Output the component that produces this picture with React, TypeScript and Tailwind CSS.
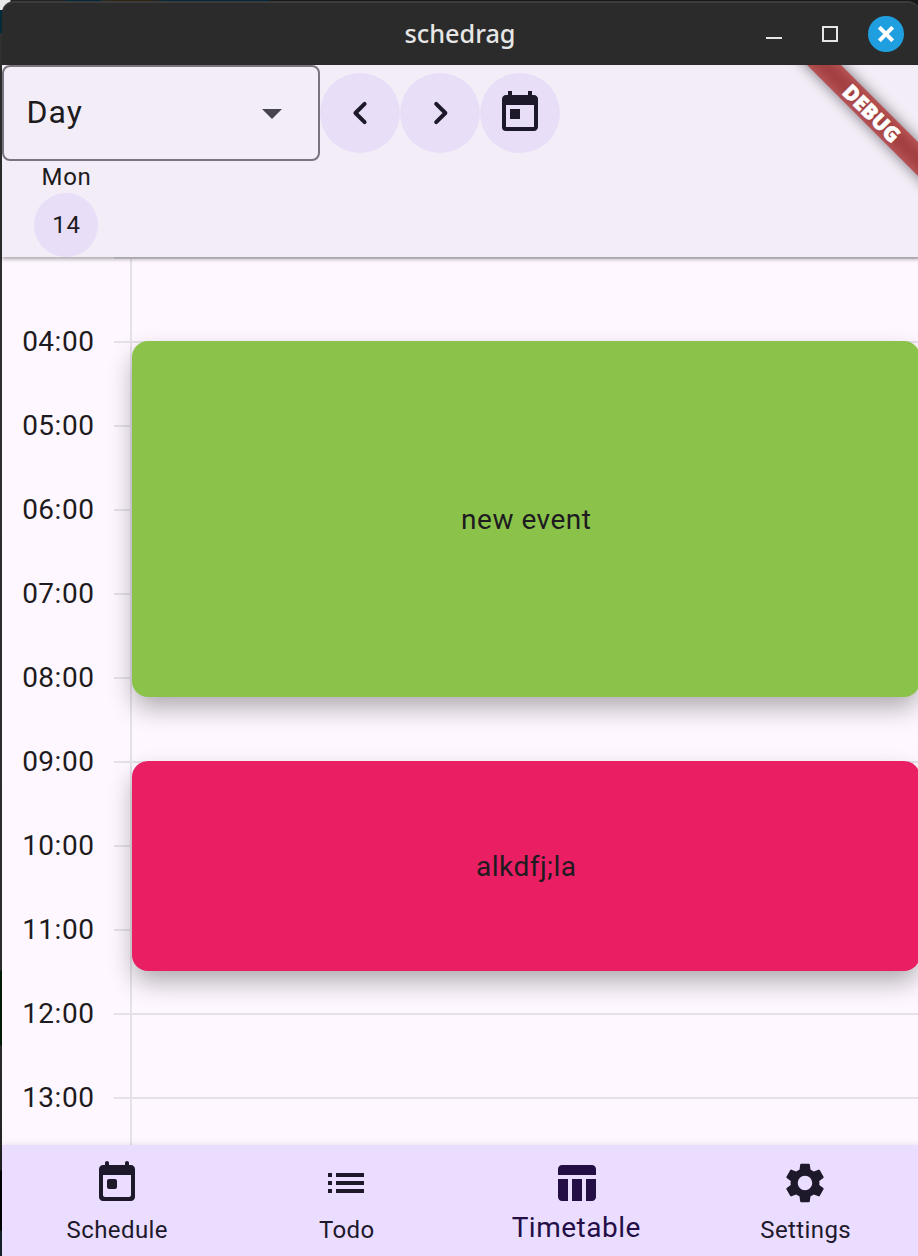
import type { ReactNode } from "react";
import { MdList, MdSettings, MdTableChart, MdToday } from "react-icons/md";

const HOUR = 84;
const FIRST_HOUR = 3;
const hours = Array.from({ length: 11 }, (_, i) => FIRST_HOUR + i);

const events = [
  { title: "new event", start: 4, height: 356, color: "bg-[#8bc34a]" },
  { title: "alkdfj;la", start: 9, height: 210, color: "bg-[#e91e63]" },
];

function Chevron({ d }: { d: string }) {
  return (
    <svg viewBox="0 0 24 24" className="size-12" fill="none" stroke="currentColor" strokeWidth="2" strokeLinecap="round" strokeLinejoin="round">
      <path d={d} />
    </svg>
  );
}

function TodayRounded() {
  return (
    <svg viewBox="0 0 24 24" className="size-12" fill="currentColor">
      <path d="M19 3h-1V2c0-.55-.45-1-1-1s-1 .45-1 1v1H8V2c0-.55-.45-1-1-1s-1 .45-1 1v1H5c-1.11 0-1.99.9-1.99 2L3 19c0 1.1.89 2 2 2h14c1.1 0 2-.9 2-2V5c0-1.1-.9-2-2-2zm-1 16H6c-.55 0-1-.45-1-1V8h14v10c0 .55-.45 1-1 1zM8 10h3c.55 0 1 .45 1 1v3c0 .55-.45 1-1 1H8c-.55 0-1-.45-1-1v-3c0-.55.45-1 1-1z" />
    </svg>
  );
}

function RoundButton({ children }: { children: ReactNode }) {
  return (
    <button className="flex size-20 items-center justify-center rounded-full bg-[#e8def8] text-[#1d192b]">
      {children}
    </button>
  );
}

function TitleBar() {
  return (
    <div className="flex h-16 shrink-0 items-center rounded-t-xl border-t-2 border-[#3b3b3b] bg-[#2b2b2b]">
      <div className="w-[150px]" />
      <h1 className="flex-1 pb-px pl-[2px] text-center font-['Noto_Sans','Open_Sans',sans-serif] text-[25.3px] font-medium text-[#e6e6e6]">
        schedrag
      </h1>
      <div className="flex w-[154px] items-center text-[#e6e6e6]">
        <div className="mt-2 h-0.5 w-4 bg-[#e6e6e6]" />
        <div className="ml-10 size-4 border-2 border-[#e6e6e6]" />
        <button className="ml-[30px] flex size-9 items-center justify-center rounded-full bg-[#209fe0] text-white">
          <svg viewBox="0 0 16 16" className="size-4" stroke="currentColor" strokeWidth="4">
            <path d="M1.3 1.3L14.7 14.7M14.7 1.3L1.3 14.7" />
          </svg>
        </button>
      </div>
    </div>
  );
}

function DebugBanner() {
  return (
    <div className="pointer-events-none absolute top-0 right-0 size-36 overflow-hidden">
      <div className="absolute top-[36px] left-[-6px] h-6 w-[204px] rotate-45">
        <div className="absolute inset-0 bg-black/50 blur-[7px]" />
        <div className="relative flex h-6 items-center justify-center bg-[#b71c1c]/63 font-['Open_Sans',sans-serif] text-[20.8px] leading-none font-extrabold text-white [-webkit-text-stroke:0.6px_white]">
          DEBUG
        </div>
      </div>
    </div>
  );
}

function Header() {
  return (
    <header className="relative z-10 h-48 shrink-0 bg-[#f3edf7] shadow-[0_2px_4px_rgba(0,0,0,0.35)]">
      <div className="flex h-24 items-center">
        <div className="flex h-24 w-[318px] items-center justify-between rounded-lg border-2 border-[#79747e] pr-[22px] pl-[22.5px]">
          <span className="pb-0.5 text-[32px] tracking-[1px]">Day</span>
          <svg viewBox="0 0 24 24" className="size-12 text-[#49454f]" fill="currentColor">
            <path d="M7 10l5 5 5-5z" />
          </svg>
        </div>
        <RoundButton>
          <Chevron d="M14.3 7.41L9.71 12L14.3 16.59" />
        </RoundButton>
        <RoundButton>
          <Chevron d="M10.1 7.41L14.69 12L10.1 16.59" />
        </RoundButton>
        <RoundButton>
          <MdToday className="size-12" />
        </RoundButton>
      </div>
      <div className="flex w-32 flex-col items-center text-2xl leading-8 tracking-[0.7px]">
        <span className="pl-px">Mon</span>
        <span className="flex size-16 items-center justify-center rounded-full bg-[#e8def8] pl-px">14</span>
      </div>
      <DebugBanner />
    </header>
  );
}

function Timetable() {
  return (
    <main className="flex min-h-0 flex-1 overflow-hidden">
      <div className="w-28 shrink-0 pt-[43px] text-center text-[28px] tracking-[0.5px]">
        {hours.slice(1).map((h) => (
          <div key={h} className="flex h-[84px] items-center justify-center pl-[0.5px]">
            {String(h).padStart(2, "0")}:00
          </div>
        ))}
      </div>
      <div className="w-[18px] shrink-0 border-r-2 border-[#e6e0e9]">
        {hours.map((h) => (
          <div key={h} className="h-[84px] border-t-2 border-[#e6e0e9]" />
        ))}
      </div>
      <div className="relative flex-1">
        {hours.map((h) => (
          <div key={h} className="h-[84px] border-t-2 border-[#e6e0e9]" />
        ))}
        {events.map((e) => (
          <div
            key={e.title}
            className={`absolute inset-x-0 flex items-center justify-center rounded-2xl pt-0.5 pl-[0.5px] text-[28px] tracking-[0.5px] shadow-[0_12px_26px_-2px_rgba(0,0,0,0.33)] ${e.color}`}
            style={{ top: (e.start - FIRST_HOUR) * HOUR, height: e.height }}
          >
            {e.title}
          </div>
        ))}
      </div>
    </main>
  );
}

function NavItem({ icon, label, selected }: { icon: ReactNode; label: string; selected?: boolean }) {
  return (
    <div className={`flex flex-1 flex-col items-center pt-3.5 ${selected ? "text-[#230f46]" : "text-[#1d192b]"}`}>
      {icon}
      <span className={selected ? "mt-[3px] pl-px text-[28px] leading-9 tracking-[0.5px]" : "mt-[7px] pl-px text-2xl leading-8 tracking-[0.4px]"}>
        {label}
      </span>
    </div>
  );
}

export default function App() {
  return (
    <div className="h-[1256px] w-[918px] overflow-hidden bg-[linear-gradient(#e8e8e8_10px,#00293a_10px,#00293a_33px,#303030_33px,#2b2b2b_970px,#001a05_971px,#001a05_1045px,#2b2b2b_1046px,#202020_1170px,#000_1171px,#000_1230px,#14242b_1231px)] font-['Roboto',sans-serif] font-[370] text-[#1d1b20]">
      <div className="flex h-full w-[920px] flex-col bg-[linear-gradient(90deg,transparent_10px,#222_11px,#222_65px,#00293a_66px,#00293a_101px,#2b2b2b_102px,#2e2410_115px,#2e2410_150px,#00293a_167px,#00293a_269px,#181818_270px)] bg-[length:100%_14px] bg-no-repeat pt-px pl-0.5">
        <TitleBar />
        <div className="flex min-h-0 flex-1 flex-col bg-[#fef7ff]">
          <Header />
          <Timetable />
          <nav className="z-10 flex h-[111px] shrink-0 bg-[#eaddff] shadow-[0_0_6px_rgba(0,0,0,0.12)]">
            <NavItem icon={<TodayRounded />} label="Schedule" />
            <NavItem icon={<MdList className="size-12" />} label="Todo" />
            <NavItem icon={<MdTableChart className="size-12" />} label="Timetable" selected />
            <NavItem icon={<MdSettings className="size-12" />} label="Settings" />
          </nav>
        </div>
      </div>
    </div>
  );
}
